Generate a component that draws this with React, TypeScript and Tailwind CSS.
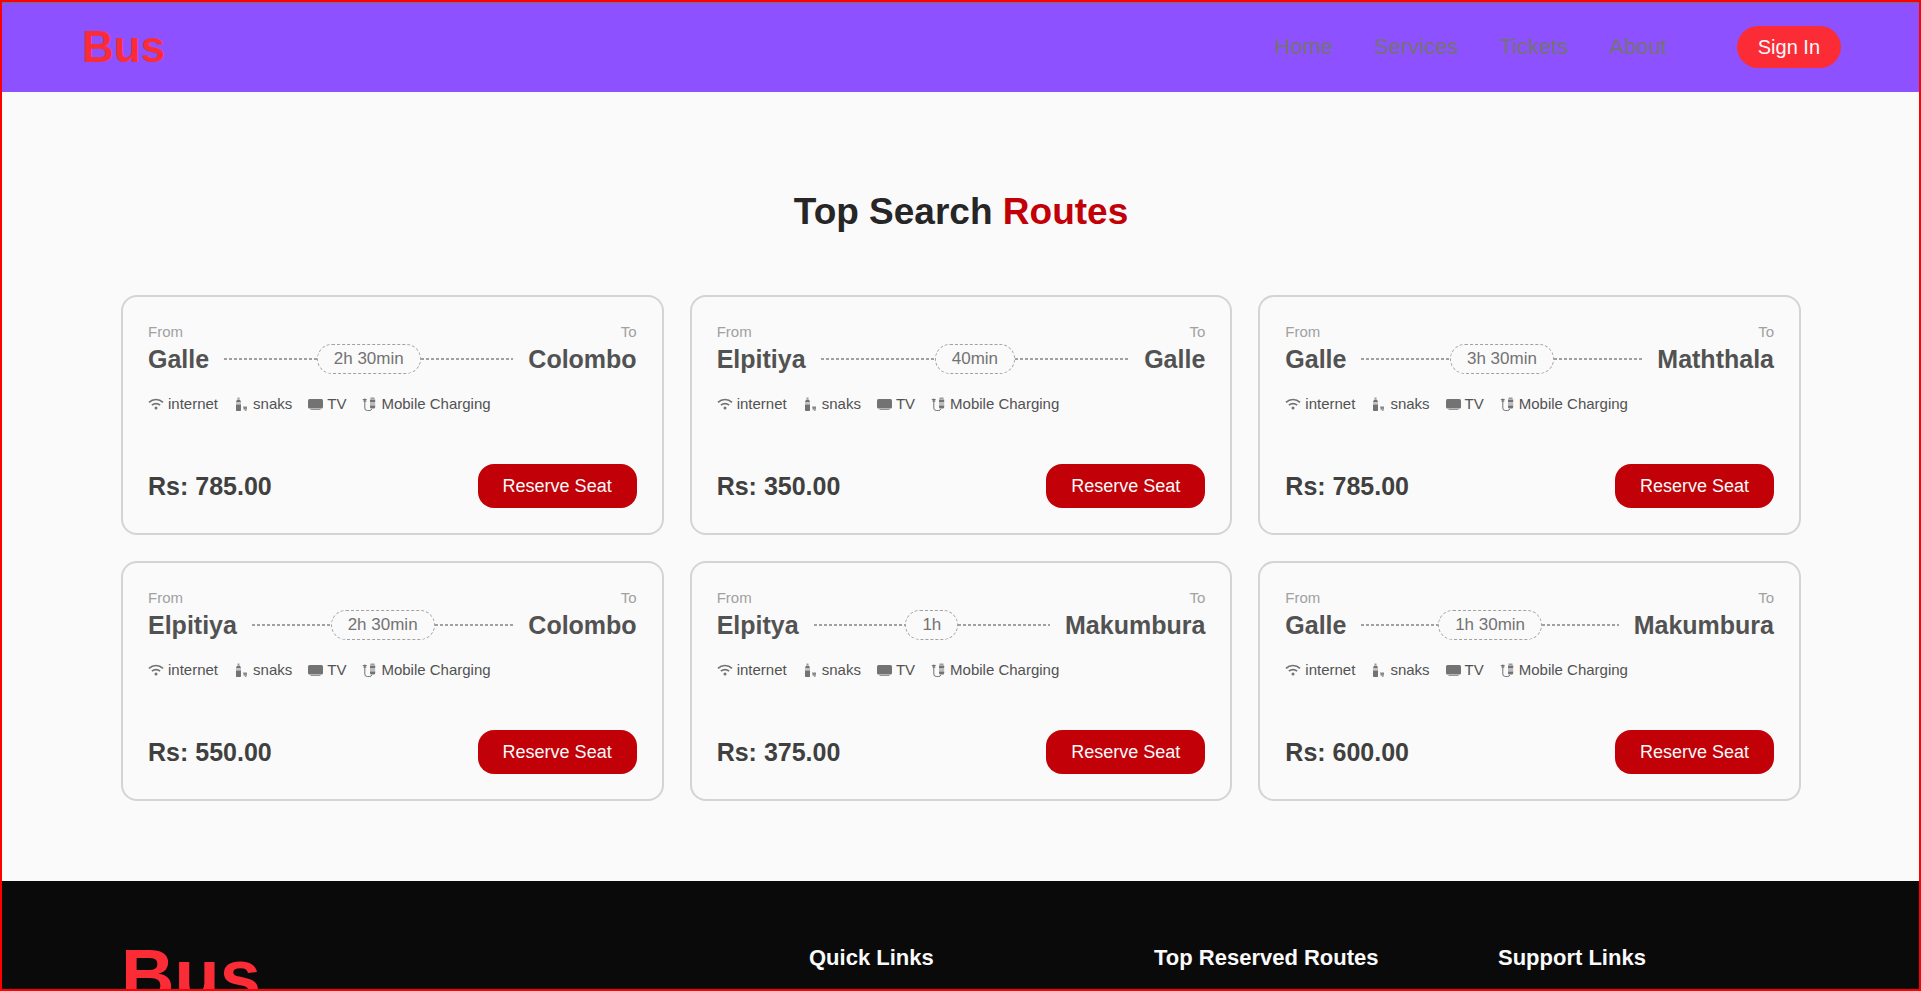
import React from "react";

const routes = [
  { from: "Galle", to: "Colombo", time: "2h 30min", price: "785.00" },
  { from: "Elpitiya", to: "Galle", time: "40min", price: "350.00" },
  { from: "Galle", to: "Maththala", time: "3h 30min", price: "785.00" },
  { from: "Elpitiya", to: "Colombo", time: "2h 30min", price: "550.00" },
  { from: "Elpitya", to: "Makumbura", time: "1h", price: "375.00" },
  { from: "Galle", to: "Makumbura", time: "1h 30min", price: "600.00" },
];

function WifiIcon() {
  return (
    <svg viewBox="0 0 16 16" className="size-4 text-neutral-500" fill="none" stroke="currentColor" strokeWidth="1.7" aria-hidden="true">
      <path d="M1 6.300a10.200 10.200 0 0 1 14 0M3.900 9.200a6 6 0 0 1 8.200 0" />
      <circle cx="8" cy="12" r="1.500" fill="currentColor" stroke="none" />
    </svg>
  );
}

function SnackIcon() {
  return (
    <svg viewBox="0 0 15 15" className="size-[15px] text-neutral-500" fill="currentColor" aria-hidden="true">
      <path d="M3.500 .5h2v2h-2z" opacity=".7" />
      <path d="M3 2.800h3l1 2.200H2z" />
      <path d="M2 5h5v2.500H2z" opacity=".4" />
      <path d="M2 7.500h5v5.700a.8.8 0 0 1-.8.800H2.800a.8.8 0 0 1-.8-.8z" />
      <path d="M9 9.500h4v1.800L12.300 14h-1.200l.4-2.400L10 13.500z" opacity=".85" />
    </svg>
  );
}

function TvIcon() {
  return (
    <svg viewBox="0 0 15 15" className="size-[15px] text-neutral-500" fill="currentColor" aria-hidden="true">
      <rect x="0" y="2" width="15" height="9.500" rx="1.500" />
      <path d="M2.500 12h10v1h-10z" opacity=".75" />
    </svg>
  );
}

function ChargingIcon() {
  return (
    <svg viewBox="0 0 15 15" className="size-[15px] text-neutral-500" aria-hidden="true">
      <path d="M.8 2.500h3.900M2.800 1.500v9.500a2.500 2.500 0 0 0 2.500 2.500h2.400a2 2 0 0 0 2-1.500" fill="none" stroke="currentColor" />
      <path d="M1.500 3h2.800v2H1.500zM8.500 .5h4v1.500h-4z" fill="currentColor" opacity=".7" />
      <path d="M8 2.500h5.200v2.500H8zM8 8.500h5.200V10a1.500 1.500 0 0 1-1.500 1.500H9.500A1.500 1.500 0 0 1 8 10z" fill="currentColor" />
      <path d="M8 5h5.200v3.500H8z" fill="currentColor" opacity=".45" />
    </svg>
  );
}

function DashedLine() {
  return <span className="h-0.5 flex-1 bg-[repeating-linear-gradient(90deg,#a1a1a1_0_3px,transparent_3px_5px)]" />;
}

function RouteCard({ from, to, time, price }: (typeof routes)[number]) {
  return (
    <article className="flex flex-col rounded-2xl border-2 border-neutral-300 px-[25px] pt-6 pb-[25px]">
      <div className="flex justify-between text-[15px] leading-[22px] text-neutral-400">
        <span>From</span>
        <span>To</span>
      </div>
      <div className="flex items-center gap-[15px]">
        <h3 className="text-[25px] leading-8 font-bold text-neutral-600">{from}</h3>
        <div className="flex flex-1 items-center">
          <DashedLine />
          <span className="rounded-full border border-dashed border-neutral-400 px-4 text-[17px] leading-7 text-neutral-500">{time}</span>
          <DashedLine />
        </div>
        <h3 className="text-[25px] leading-8 font-bold text-neutral-600">{to}</h3>
      </div>
      <ul className="mt-[17px] flex gap-4 text-[15px] leading-6 text-neutral-600">
        <li className="flex items-center gap-1"><WifiIcon />internet</li>
        <li className="flex items-center gap-1"><SnackIcon />snaks</li>
        <li className="flex items-center gap-1"><TvIcon />TV</li>
        <li className="flex items-center gap-1"><ChargingIcon />Mobile Charging</li>
      </ul>
      <div className="mt-12 flex items-center justify-between">
        <p className="text-[25px] leading-8 font-bold text-neutral-700">Rs: {price}</p>
        <button type="button" className="rounded-2xl bg-[#c10007] px-[25px] py-2 text-lg text-neutral-50">Reserve Seat</button>
      </div>
    </article>
  );
}

export default function App() {
  return (
    <div className="h-screen overflow-hidden border-2 border-[#ff0000] bg-neutral-50 font-['Liberation_Sans',Arial,sans-serif]">
      <header className="flex h-[90px] items-center justify-between border-t border-neutral-500 bg-[#8e51ff] pr-[78px] pb-0.5 pl-20">
        <a href="#" className="text-[44px] leading-none font-bold text-[#fb2c36]">Bus</a>
        <div className="flex items-center gap-[70px]">
          <nav className="flex gap-[41px] text-[22px] text-neutral-500">
            <a href="#">Home</a>
            <a href="#">Services</a>
            <a href="#">Tickets</a>
            <a href="#">About</a>
          </nav>
          <button type="button" className="h-[42px] rounded-full bg-[#fb2c36] px-[21px] text-xl text-neutral-50">Sign In</button>
        </div>
      </header>
      <main className="pt-24 pr-[118px] pb-20 pl-[119px]">
        <h1 className="text-center text-[37px] leading-12 font-bold text-neutral-800">
          Top Search <span className="text-[#c10007]">Routes</span>
        </h1>
        <section className="mt-[59px] grid grid-cols-3 gap-[26px]">
          {routes.map((r, i) => (
            <RouteCard key={i} {...r} />
          ))}
        </section>
      </main>
      <footer className="grid grid-cols-[688fr_345fr_344fr_302fr] bg-neutral-950 px-[119px] pt-15 pb-20">
        <p className="text-[74px] leading-[70px] font-bold text-[#fb2c36]">Bus</p>
        <h2 className="text-[22px] font-bold text-neutral-50">Quick Links</h2>
        <h2 className="text-[22px] font-bold text-neutral-50">Top Reserved Routes</h2>
        <h2 className="text-[22px] font-bold text-neutral-50">Support Links</h2>
      </footer>
    </div>
  );
}
